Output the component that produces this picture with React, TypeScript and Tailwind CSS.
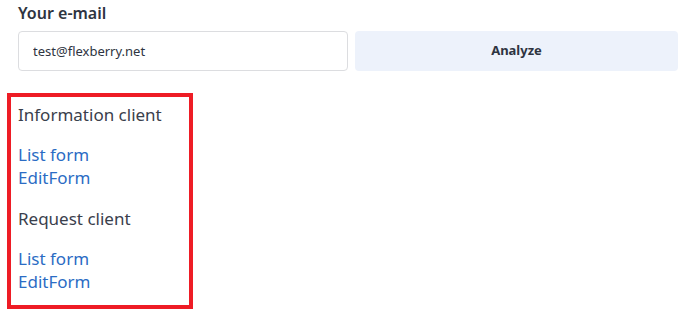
import React from "react";

const sections = [
  { title: "Information client", links: ["List form", "EditForm"] },
  { title: "Request client", links: ["List form", "EditForm"] },
];

export default function App() {
  return (
    <div className="h-[317px] w-[681px] bg-white font-['Noto_Sans',sans-serif] text-[#343a46]">
      <div className="pl-[18px] pr-[3px] pt-[2px]">
        <label className="block text-[16px] font-semibold leading-[22px] text-[#2e3441]">
          Your e-mail
        </label>
        <div className="mt-[7px] flex gap-[7px]">
          <input
            type="text"
            defaultValue="test@flexberry.net"
            className="h-[40px] w-[330px] rounded-[4px] border border-[#dcdde0] px-[14px] text-[13px] text-[#2e3441] outline-none"
          />
          <button
            type="button"
            className="h-[40px] flex-1 rounded-[4px] bg-[#edf2fb] text-[13px] font-bold text-[#2e3441]"
          >
            Analyze
          </button>
        </div>
      </div>

      <div className="ml-[7px] mt-[22px] w-[186px] border-4 border-[#ee1c25] px-[7px] pb-[12px] pt-[6px]">
        {sections.map((s) => (
          <div key={s.title} className="mb-[18px] last:mb-0">
            <div className="mb-[17px] text-[17px] leading-[23px] text-[#3a404c]">
              {s.title}
            </div>
            {s.links.map((l) => (
              <a
                key={l}
                href="#"
                className="block text-[17px] leading-[23px] text-[#2b6cc4]"
              >
                {l}
              </a>
            ))}
          </div>
        ))}
      </div>
    </div>
  );
}
